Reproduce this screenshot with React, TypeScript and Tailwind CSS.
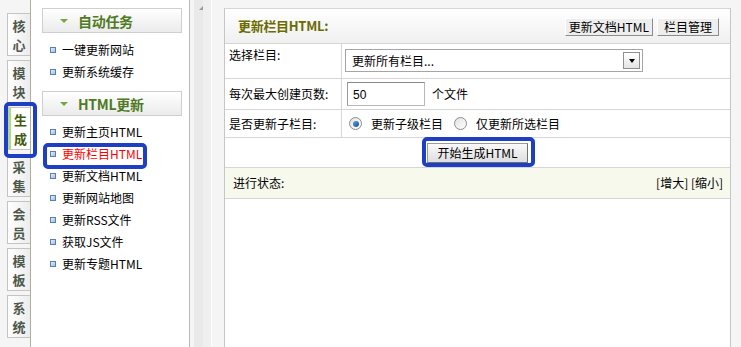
import React from "react";

const tabs: [string, string][] = [
  ["核", "心"],
  ["模", "块"],
  ["生", "成"],
  ["采", "集"],
  ["会", "员"],
  ["模", "板"],
  ["系", "统"],
];
const items1 = ["一键更新网站", "更新系统缓存"];
const items2 = ["更新主页HTML", "更新栏目HTML", "更新文档HTML", "更新网站地图", "更新RSS文件", "获取JS文件", "更新专题HTML"];

function Bullet() {
  return <span className="block w-[6px] h-[6px] border border-[#5d7fb0] bg-gradient-to-br from-[#e4eefa] to-[#9dbde6] shrink-0" />;
}

function SideHeader({ title }: { title: string }) {
  return (
    <div className="w-[140px] h-[25px] border border-[#cfcfcf] bg-gradient-to-b from-white to-[#ebebeb] flex items-center">
      <span className="ml-[17px] w-0 h-0 border-l-[4px] border-r-[4px] border-t-[4px] border-l-transparent border-r-transparent border-t-[#7aa63e]" />
      <span className="ml-[10px] text-[14px] font-bold text-[#4f7a24] leading-[18px] tracking-[-0.3px]">{title}</span>
    </div>
  );
}

function Item({ text, active }: { text: string; active?: boolean }) {
  return (
    <div className="h-[22px] flex items-center pl-[8px] gap-[6px]">
      <Bullet />
      <span className={"text-[12px] leading-[16px] " + (active ? "text-[#ff0000]" : "text-black")}>{text}</span>
    </div>
  );
}

function Radio({ checked }: { checked?: boolean }) {
  return (
    <span className="w-[13px] h-[13px] rounded-full border border-[#8c8c8c] bg-gradient-to-br from-[#e2e2e2] to-white flex items-center justify-center shrink-0">
      {checked && <span className="w-[6px] h-[6px] rounded-full bg-gradient-to-br from-[#5aa0e0] to-[#1b4f99]" />}
    </span>
  );
}

export default function App() {
  return (
    <div className="relative w-[741px] h-[347px] overflow-hidden flex bg-[#f5f5f5] text-[12px] text-black font-['Noto_Sans_CJK_SC',sans-serif]">
      {/* tabs column */}
      <div className="w-[31px] h-full border-r border-[#aeae9e] flex flex-col gap-[4px] pt-[13px] pl-[7px] shrink-0">
        {tabs.map((t, i) => {
          const active = i === 2;
          return (
            <div
              key={i}
              className={
                "w-[23px] h-[43px] border border-r-0 flex flex-col items-center justify-center text-[13px] font-bold " +
                (active
                  ? "bg-white border-[#c4c4c4] border-l-[4px] border-l-[#b5d68a] text-[#3f5a0a]"
                  : "bg-gradient-to-r from-white to-[#ececec] border-[#c4c4c4] text-[#4d584b]")
              }
            >
              <span className="block h-[19px] leading-[19px]">{t[0]}</span>
              <span className="block h-[19px] leading-[19px]">{t[1]}</span>
            </div>
          );
        })}
      </div>

      {/* sidebar */}
      <div className="w-[159px] h-full bg-white border-r border-[#b8b8b8] pt-[8px] pl-[11px] shrink-0">
        <SideHeader title="自动任务" />
        <div className="mt-[6px] mb-[8px]">
          {items1.map((t) => (
            <Item key={t} text={t} />
          ))}
        </div>
        <SideHeader title="HTML更新" />
        <div className="mt-[5px]">
          {items2.map((t, i) => (
            <Item key={t} text={t} active={i === 1} />
          ))}
        </div>
      </div>

      {/* scroll strip */}
      <div className="w-[22px] h-full border-r border-white flex shrink-0">
        <div className="w-[4px] h-full bg-[#f5f5f5]" />
        <div className="w-[9px] h-full bg-[#e9e9e9] flex justify-end">
          <span className="mt-[6px] mr-[-4px] w-0 h-0 border-l-[4px] border-r-[4px] border-b-[4px] border-l-transparent border-r-transparent border-b-[#9a9a9a]" />
        </div>
        <div className="w-[8px] h-full bg-[#efefef]" />
      </div>

      {/* gutter */}
      <div className="w-[12px] h-full bg-[#f5f5f5] shrink-0" />

      {/* main */}
      <div className="w-[507px] mt-[8px] h-[339px] bg-white border border-b-0 border-[#c6c6c6] border-t-[#d6d6d6] flex flex-col shrink-0">
        <div className="h-[35px] border-b border-[#d6d6d6] bg-gradient-to-b from-white to-[#f0f0f0] flex items-center justify-between pl-[13px] pr-[11px]">
          <span className="text-[13px] font-bold text-[#6b6b00] leading-[18px] tracking-[-0.3px]">更新栏目HTML:</span>
          <div className="flex gap-[4px] mt-[2px]">
            <span className="h-[18px] px-[3px] flex items-center bg-[#eeeeee] border border-t-white border-l-white border-r-[#8c8c8c] border-b-[#8c8c8c] leading-[14px]">更新文档HTML</span>
            <span className="h-[18px] px-[6px] flex items-center bg-[#eeeeee] border border-t-white border-l-white border-r-[#8c8c8c] border-b-[#8c8c8c] leading-[14px]">栏目管理</span>
          </div>
        </div>

        {/* row 1 */}
        <div className="h-[35px] border-b border-[#d6d6d6] flex">
          <div className="w-[117px] border-r border-[#d6d6d6] pl-[4px] pt-[3px] leading-[16px]">选择栏目:</div>
          <div className="flex-1 pl-[3px] pt-[5px]">
            <div className="w-[298px] h-[23px] border border-[#a5a5a5] flex items-center justify-between pl-[6px] pr-[2px]">
              <span className="leading-[14px]">更新所有栏目...</span>
              <span className="w-[17px] h-[17px] border border-[#8f8f8f] bg-gradient-to-b from-white to-[#e4e4e4] flex items-center justify-center">
                <span className="w-0 h-0 border-l-[3px] border-r-[3px] border-t-[4px] border-l-transparent border-r-transparent border-t-black" />
              </span>
            </div>
          </div>
        </div>

        {/* row 2 */}
        <div className="h-[31px] border-b border-[#d6d6d6] flex">
          <div className="w-[117px] border-r border-[#d6d6d6] pl-[4px] flex items-center leading-[16px]">每次最大创建页数:</div>
          <div className="flex-1 pl-[5px] flex items-center gap-[7px]">
            <div className="w-[78px] h-[24px] border border-[#b8b8b8] border-t-[#8a8a8a] border-l-[#9a9a9a] flex items-center pl-[5px]">
              <span className="font-['Liberation_Sans',sans-serif] text-[12px] leading-[14px] mt-[2px]">50</span>
            </div>
            <span className="leading-[14px]">个文件</span>
          </div>
        </div>

        {/* row 3 */}
        <div className="h-[28px] border-b border-[#d6d6d6] flex">
          <div className="w-[117px] border-r border-[#d6d6d6] pl-[4px] flex items-center leading-[16px]">是否更新子栏目:</div>
          <div className="flex-1 pl-[7px] flex items-center">
            <Radio checked />
            <span className="ml-[9px] leading-[14px]">更新子级栏目</span>
            <span className="ml-[11px]"><Radio /></span>
            <span className="ml-[9px] leading-[14px]">仅更新所选栏目</span>
          </div>
        </div>

        {/* row 4 */}
        <div className="h-[30px] border-b border-[#d6d6d6] flex items-center justify-center">
          <span className="w-[101px] h-[20px] flex items-center justify-center bg-gradient-to-b from-[#fafafa] to-[#dedede] border border-[#9a9a9a] border-r-[#707070] border-b-[#707070] leading-[14px]">开始生成HTML</span>
        </div>

        {/* row 5 */}
        <div className="h-[31px] border-b border-[#d6d6d6] bg-[#f8f9ed] flex items-center justify-between pl-[8px] pr-[7px]">
          <span className="leading-[14px]">进行状态:</span>
          <span className="leading-[14px]">[增大] [缩小]</span>
        </div>
        <div className="flex-1 bg-white" />
      </div>

      {/* right gutter */}
      <div className="w-[10px] h-full bg-[#f5f5f5] shrink-0" />

      {/* annotation overlays */}
      <div className="absolute left-[4px] top-[102px] w-[33px] h-[56px] border-[4px] border-[#1e3ec4] rounded-[5px]" />
      <div className="absolute left-[43px] top-[143px] w-[104px] h-[26px] border-[4px] border-[#1e3ec4] rounded-[5px]" />
      <div className="absolute left-[422px] top-[137px] w-[113px] h-[30px] border-[4px] border-[#1e3ec4] rounded-[5px]" />
    </div>
  );
}
